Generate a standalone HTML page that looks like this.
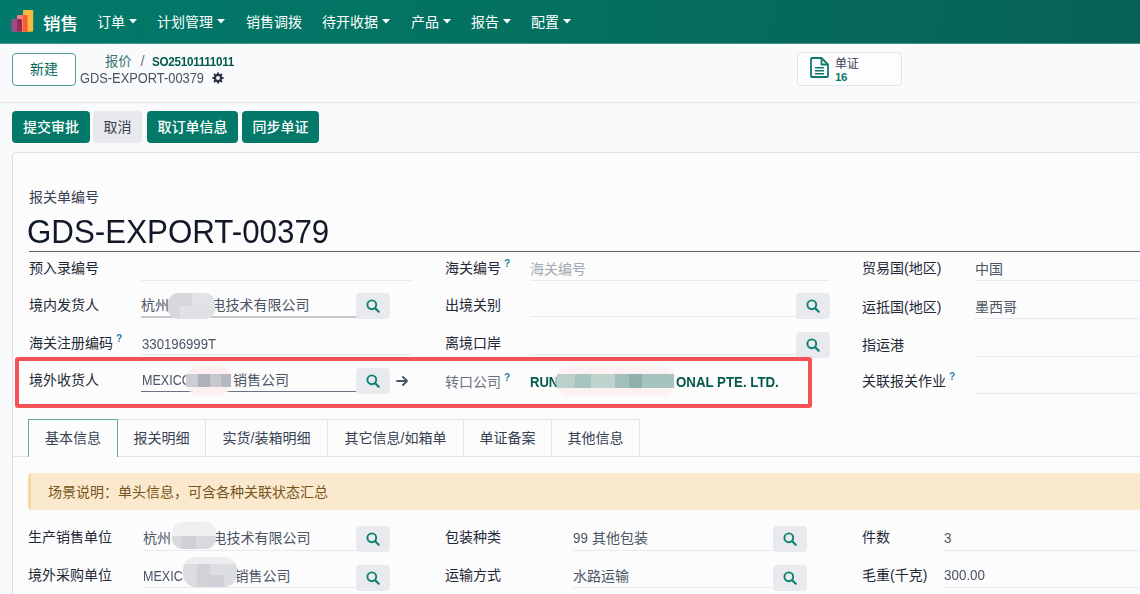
<!DOCTYPE html>
<html lang="zh-CN">
<head>
<meta charset="utf-8">
<title>销售</title>
<style>
*{box-sizing:border-box;margin:0;padding:0}
html,body{width:1140px;height:594px;overflow:hidden;background:#f9fafb}
body{font-family:"Liberation Sans","Noto Sans CJK SC",sans-serif;font-size:14px;color:#374151;position:relative}
.abs{position:absolute;white-space:nowrap;line-height:1}
/* navbar */
#nav{position:absolute;left:0;top:0;width:1140px;height:43px;background:linear-gradient(98deg,#01796b 0%,#04705f 50%,#076158 100%)}
#nav .brand{position:absolute;left:43px;top:13px;font-size:17.500px;font-weight:500;color:#fff;line-height:22px;white-space:nowrap}
#nav .mi{position:absolute;top:13px;font-size:14px;color:#fff;line-height:18px;white-space:nowrap}
#nav .caret{display:inline-block;margin-left:4px;vertical-align:3.500px}
#navb{position:absolute;left:0;top:43px;width:1140px;height:1px;background:linear-gradient(98deg,#3f9a8f 0%,#41948a 50%,#438b84 100%);z-index:2}
/* control panel */
#cp{position:absolute;left:0;top:43px;width:1140px;height:60px;background:#f9fafb;border-bottom:1px solid #e4e6ea}
.btn-new{position:absolute;left:12px;top:53px;width:64px;height:33px;border:1px solid #4fa195;border-radius:4px;background:#fff;color:#04695b;font-size:14px;text-align:center;line-height:31px}
.bc1{left:105px;top:53px;font-size:13.300px;line-height:16px;color:#37776e}
.bc1 b{color:#04594d;font-weight:700}
.bc1 .sl{color:#6b7280;margin:0 7px 0 9px;font-size:14.500px}
.bc2{left:80px;top:70px;font-size:14px;line-height:16px;color:#4b5563}
.statbtn{position:absolute;left:797px;top:52px;width:105px;height:34px;border:1px solid #e1e4e8;border-radius:4px;background:#fdfdfe}
.statbtn .t1{position:absolute;left:37px;top:5px;font-size:12px;line-height:13px;color:#374151}
.statbtn .t2{position:absolute;left:37px;top:18px;font-size:11.500px;line-height:13px;color:#0c7a6b;font-weight:700;letter-spacing:-0.300px}
/* status bar */
#sb{position:absolute;left:0;top:103px;width:1140px;height:51px;background:#f9fafb}
.b{position:absolute;top:111px;height:32px;border-radius:4px;font-size:14px;line-height:33.500px;text-align:center;white-space:nowrap}
.bp{background:#03796a;color:#fff;font-weight:500}
.bs{background:#e7e9ed;color:#374151}
/* sheet */
#sheet{position:absolute;left:12px;top:152px;width:1140px;height:460px;background:#fcfcfc;border:1px solid #dcdfe4;border-radius:4px 0 0 0}
.lbl{font-size:14px;color:#1f2937;font-weight:400}
.val{font-size:14px;color:#4b5563}
.ul{position:absolute;height:1px;background:#e8eaed}
.sbtn{position:absolute;width:34px;height:26px;background:#e9eaee;border-radius:4px}
.sbtn svg{position:absolute;left:10px;top:6px}
sup.q{font-size:10px;line-height:1;color:#1d86a3;font-weight:700;position:relative;top:-6px;margin-left:3px;vertical-align:baseline}

.t14{font-size:14px;line-height:20px}
.l{font-size:13px;letter-spacing:-0.150px}
.lb{display:inline-block;font-size:13px;letter-spacing:-0.300px;transform:scaleX(0.896);transform-origin:0 50%}
.ld{font-size:13px;letter-spacing:0.100px}
.w{display:inline-block;vertical-align:baseline;white-space:nowrap;line-height:1}
.s{display:inline-block;font-size:14.500px;transform-origin:0 50%}
.lbb{font-size:13.500px;letter-spacing:-0.100px}
.c-lbl2{color:#374151}
.title{font-size:34px;line-height:40px;color:#111827;transform-origin:0 50%;transform:scaleX(0.921)}
.ul.dk{background:#5b6270}
.ul.md{background:#8e94a0}
.gap{display:inline-block;height:1px}
.bl{position:absolute;overflow:hidden;filter:blur(0.700px)}
.bl i{position:absolute;display:block}
.b2 i{top:0;height:100%}
.tab{position:absolute;top:419px;height:37px;border:1px solid #e3e5e9;border-bottom:none;font-size:14px;line-height:37px;text-align:center;color:#374151;white-space:nowrap;background:#fcfcfc}
.tab.act{border-color:#62aaa0;background:#fcfcfc;height:38px;z-index:2}
</style>
</head>
<body>
<div id="nav">
  <svg style="position:absolute;left:11px;top:10px" width="23" height="22" viewBox="11 10 23 22">
    <rect x="11.400" y="19" width="10.600" height="12.800" rx="1.300" fill="#9b4d87"/>
    <rect x="17" y="15" width="10.600" height="16.800" rx="1.300" fill="#f87b7f"/>
    <path d="M17 19h3.700a1.300 1.300 0 0 1 1.300 1.300v10.200a1.300 1.300 0 0 1-1.300 1.300h-2.400a1.300 1.300 0 0 1-1.300-1.300z" fill="#962a55"/>
    <rect x="23" y="10" width="10.200" height="21.800" rx="1.300" fill="#fbb843"/>
    <path d="M23 15h3.300a1.300 1.300 0 0 1 1.300 1.300v14.200a1.300 1.300 0 0 1-1.300 1.300h-2a1.300 1.300 0 0 1-1.300-1.300z" fill="#f5602a"/>
  </svg>
  <div class="brand">销售</div>
  <div class="mi" style="left:97px">订单<svg class="caret" width="8" height="5" viewBox="0 0 8 5"><path d="M0 0h8L4 4.600z" fill="#fff"/></svg></div>
  <div class="mi" style="left:157px">计划管理<svg class="caret" width="8" height="5" viewBox="0 0 8 5"><path d="M0 0h8L4 4.600z" fill="#fff"/></svg></div>
  <div class="mi" style="left:246px">销售调拨</div>
  <div class="mi" style="left:322px">待开收据<svg class="caret" width="8" height="5" viewBox="0 0 8 5"><path d="M0 0h8L4 4.600z" fill="#fff"/></svg></div>
  <div class="mi" style="left:411px">产品<svg class="caret" width="8" height="5" viewBox="0 0 8 5"><path d="M0 0h8L4 4.600z" fill="#fff"/></svg></div>
  <div class="mi" style="left:471px">报告<svg class="caret" width="8" height="5" viewBox="0 0 8 5"><path d="M0 0h8L4 4.600z" fill="#fff"/></svg></div>
  <div class="mi" style="left:531px">配置<svg class="caret" width="8" height="5" viewBox="0 0 8 5"><path d="M0 0h8L4 4.600z" fill="#fff"/></svg></div>
</div>
<div id="navb"></div>
<div id="cp"></div>
<div class="btn-new">新建</div>
<div class="abs bc1">报价<span class="sl">/</span><b class="lb">SO25101111011</b></div>
<div class="abs bc2"><span class="s" style="transform:scaleX(0.886)">GDS-EXPORT-00379</span></div>
<svg style="position:absolute;left:212px;top:72px" width="12" height="12" viewBox="0 0 16 16"><path fill="#2b3443" fill-rule="evenodd" d="M6.56 2.59L6.71 0.51L9.29 0.51L9.44 2.59L10.81 3.16L12.39 1.79L14.21 3.61L12.84 5.19L13.41 6.56L15.49 6.71L15.49 9.29L13.41 9.44L12.84 10.81L14.21 12.39L12.39 14.21L10.81 12.84L9.44 13.41L9.29 15.49L6.71 15.49L6.56 13.41L5.19 12.84L3.61 14.21L1.79 12.39L3.16 10.81L2.59 9.44L0.51 9.29L0.51 6.71L2.59 6.56L3.16 5.19L1.79 3.61L3.61 1.79L5.19 3.16zM8 5.4a2.6 2.6 0 1 0 0 5.2a2.6 2.6 0 1 0 0 -5.2z"/></svg>
<div class="statbtn">
  <svg style="position:absolute;left:11.500px;top:4px" width="19" height="22" viewBox="0 0 19 22" fill="none" stroke="#0c7a6b" stroke-width="1.800" stroke-linejoin="round"><path d="M2.500 1h9l6.500 6.500v11.500a1 1 0 0 1-1 1h-15a1 1 0 0 1-1-1v-17a1 1 0 0 1 1-1z"/><path d="M11.500 1v6.500h6.500"/><path d="M5 10.800h9M5 13.800h9M5 16.800h9" stroke-width="1.500"/></svg>
  <div class="t1">单证</div><div class="t2">16</div>
</div>
<div id="sb"></div>
<div class="b bp" style="left:12px;width:78px">提交审批</div>
<div class="b bs" style="left:93px;width:49px">取消</div>
<div class="b bp" style="left:147px;width:91px">取订单信息</div>
<div class="b bp" style="left:242px;width:77px">同步单证</div>
<div id="sheet"></div>

<!-- form sheet content -->
<div class="abs t14 c-lbl2" style="left:29px;top:187px">报关单编号</div>
<div class="abs title" style="left:27px;top:211px">GDS-EXPORT-00379</div>
<div class="ul dk" style="left:29px;top:251px;width:1111px"></div>

<!-- left column -->
<div class="abs t14 lbl" style="left:29px;top:258px">预入录编号</div>
<div class="ul" style="left:141px;top:280px;width:271px"></div>
<div class="abs t14 lbl" style="left:29px;top:295px">境内发货人</div>
<div class="abs t14 val" style="left:141px;top:295px">杭州<span class="gap" style="width:42.500px"></span>电技术有限公司</div>
<div class="ul" style="left:141px;top:316px;width:216px;height:2px;background:#c4c6cc"></div>
<div class="sbtn" style="left:356px;top:293px"><svg width="14" height="14" viewBox="0 0 14 14"><circle cx="5.800" cy="5.800" r="4.400" fill="none" stroke="#0a8070" stroke-width="1.900"/><path d="M9.200 9.200l3.500 3.500" stroke="#0a8070" stroke-width="2.100" stroke-linecap="round"/></svg></div>
<div class="abs t14 lbl" style="left:29px;top:333px">海关注册编码<sup class="q">?</sup></div>
<div class="abs t14 val" style="left:142px;top:334px"><span class="w" style="width:74px"><span class="s" style="transform:scaleX(0.909)">330196999T</span></span></div>
<div class="ul" style="left:141px;top:354px;width:271px"></div>
<div class="abs t14 lbl" style="left:29px;top:370px">境外收货人</div>
<div class="abs t14 val" style="left:141.500px;top:370px"><span class="w" style="width:49.5px"><span class="s" style="transform:scaleX(0.865)">MEXICO</span></span><span class="gap" style="width:42px"></span>销售公司</div>
<div class="ul" style="left:141px;top:391px;width:216px;background:#6b7280"></div>
<div class="sbtn" style="left:356px;top:368px"><svg width="14" height="14" viewBox="0 0 14 14"><circle cx="5.800" cy="5.800" r="4.400" fill="none" stroke="#0a8070" stroke-width="1.900"/><path d="M9.200 9.200l3.500 3.500" stroke="#0a8070" stroke-width="2.100" stroke-linecap="round"/></svg></div>
<svg style="position:absolute;left:395.500px;top:376px" width="12" height="10" viewBox="0 0 12 10" fill="none" stroke="#4b5563" stroke-width="1.900" stroke-linecap="round" stroke-linejoin="round"><path d="M1 5h10M7 1l4 4-4 4"/></svg>

<!-- middle column -->
<div class="abs t14 lbl" style="left:445px;top:258px">海关编号<sup class="q">?</sup></div>
<div class="abs t14" style="left:530px;top:259px;color:#a3a9b3">海关编号</div>
<div class="ul" style="left:530px;top:280px;width:299px"></div>
<div class="abs t14 lbl" style="left:445px;top:294.500px">出境关别</div>
<div class="ul" style="left:530px;top:316px;width:267px"></div>
<div class="sbtn" style="left:796px;top:293px"><svg width="14" height="14" viewBox="0 0 14 14"><circle cx="5.800" cy="5.800" r="4.400" fill="none" stroke="#0a8070" stroke-width="1.900"/><path d="M9.200 9.200l3.500 3.500" stroke="#0a8070" stroke-width="2.100" stroke-linecap="round"/></svg></div>
<div class="abs t14 lbl" style="left:445px;top:333px">离境口岸</div>
<div class="ul" style="left:530px;top:354px;width:267px"></div>
<div class="sbtn" style="left:796px;top:332px"><svg width="14" height="14" viewBox="0 0 14 14"><circle cx="5.800" cy="5.800" r="4.400" fill="none" stroke="#0a8070" stroke-width="1.900"/><path d="M9.200 9.200l3.500 3.500" stroke="#0a8070" stroke-width="2.100" stroke-linecap="round"/></svg></div>
<div class="abs t14" style="left:445px;top:372px;color:#6b7280">转口公司<sup class="q">?</sup></div>
<div class="abs t14" style="left:530px;top:372px;color:#04594d;font-weight:700"><span class="w" style="width:28px"><span class="s" style="transform:scaleX(0.9)">RUN</span></span><span class="gap" style="width:117.500px"></span><span class="w" style="width:103px"><span class="s" style="transform:scaleX(0.916)">ONAL PTE. LTD.</span></span></div>

<!-- right column -->
<div class="abs t14 lbl" style="left:862px;top:258px">贸易国(地区)</div>
<div class="abs t14 val" style="left:975px;top:259px">中国</div>
<div class="ul" style="left:975px;top:280px;width:165px"></div>
<div class="abs t14 lbl" style="left:862px;top:297px">运抵国(地区)</div>
<div class="abs t14 val" style="left:975px;top:297px">墨西哥</div>
<div class="ul" style="left:975px;top:318px;width:165px"></div>
<div class="abs t14 lbl" style="left:862px;top:335px">指运港</div>
<div class="ul" style="left:975px;top:356px;width:165px"></div>
<div class="abs t14 lbl" style="left:862px;top:371px">关联报关作业<sup class="q">?</sup></div>
<div class="ul" style="left:975px;top:393px;width:165px"></div>

<!-- red highlight -->
<div style="position:absolute;left:15px;top:357px;width:797px;height:51px;border:4px solid #f65256;border-radius:3px"></div>

<!-- tabs -->
<div class="ul" style="left:13px;top:456px;width:1127px;background:#e3e5e9"></div>
<div class="tab act" style="left:28px;width:90px">基本信息</div>
<div class="tab" style="left:117px;width:89px">报关明细</div>
<div class="tab" style="left:205px;width:123px">实货/装箱明细</div>
<div class="tab" style="left:327px;width:137px">其它信息/如箱单</div>
<div class="tab" style="left:463px;width:89px">单证备案</div>
<div class="tab" style="left:551px;width:89px">其他信息</div>

<!-- alert -->
<div style="position:absolute;left:28px;top:473px;width:1120px;height:37px;background:#fbe9cd;border-left:3px solid #f6d8a6;border-radius:4px 0 0 4px"></div>
<div class="abs t14" style="left:48px;top:482px;color:#76551c">场景说明：单头信息，可含各种关联状态汇总</div>

<!-- bottom rows -->
<div class="abs t14 lbl" style="left:28px;top:527px">生产销售单位</div>
<div class="abs t14 val" style="left:143px;top:528px">杭州<span class="gap" style="width:41.500px"></span>电技术有限公司</div>
<div class="ul" style="left:143px;top:550px;width:213px"></div>
<div class="sbtn" style="left:356px;top:526px"><svg width="14" height="14" viewBox="0 0 14 14"><circle cx="5.800" cy="5.800" r="4.400" fill="none" stroke="#0a8070" stroke-width="1.900"/><path d="M9.200 9.200l3.500 3.500" stroke="#0a8070" stroke-width="2.100" stroke-linecap="round"/></svg></div>
<div class="abs t14 lbl" style="left:28px;top:565px">境外采购单位</div>
<div class="abs t14 val" style="left:143px;top:566px"><span class="w" style="width:39.6px"><span class="s" style="transform:scaleX(0.865)">MEXIC</span></span><span class="gap" style="width:51.800px"></span>销售公司</div>
<div class="ul" style="left:143px;top:587px;width:213px"></div>
<div class="sbtn" style="left:356px;top:565px"><svg width="14" height="14" viewBox="0 0 14 14"><circle cx="5.800" cy="5.800" r="4.400" fill="none" stroke="#0a8070" stroke-width="1.900"/><path d="M9.200 9.200l3.500 3.500" stroke="#0a8070" stroke-width="2.100" stroke-linecap="round"/></svg></div>

<div class="abs t14 lbl" style="left:445px;top:527px">包装种类</div>
<div class="abs t14 val" style="left:573px;top:528px"><span class="w" style="width:15px"><span class="s" style="transform:scaleX(0.93)">99</span></span> 其他包装</div>
<div class="ul" style="left:573px;top:550px;width:200px"></div>
<div class="sbtn" style="left:773px;top:526px"><svg width="14" height="14" viewBox="0 0 14 14"><circle cx="5.800" cy="5.800" r="4.400" fill="none" stroke="#0a8070" stroke-width="1.900"/><path d="M9.200 9.200l3.500 3.500" stroke="#0a8070" stroke-width="2.100" stroke-linecap="round"/></svg></div>
<div class="abs t14 lbl" style="left:445px;top:565px">运输方式</div>
<div class="abs t14 val" style="left:573px;top:566px">水路运输</div>
<div class="ul" style="left:573px;top:587px;width:200px"></div>
<div class="sbtn" style="left:773px;top:565px"><svg width="14" height="14" viewBox="0 0 14 14"><circle cx="5.800" cy="5.800" r="4.400" fill="none" stroke="#0a8070" stroke-width="1.900"/><path d="M9.200 9.200l3.500 3.500" stroke="#0a8070" stroke-width="2.100" stroke-linecap="round"/></svg></div>

<div class="abs t14 lbl" style="left:862px;top:527px">件数</div>
<div class="abs t14 val" style="left:944px;top:528px"><span class="w" style="width:7.5px"><span class="s" style="transform:scaleX(0.93)">3</span></span></div>
<div class="ul" style="left:944px;top:550px;width:196px"></div>
<div class="abs t14 lbl" style="left:862px;top:565px">毛重(千克)</div>
<div class="abs t14 val" style="left:944px;top:565px"><span class="w" style="width:41px"><span class="s" style="transform:scaleX(0.925)">300.00</span></span></div>
<div class="ul" style="left:944px;top:587px;width:196px"></div>

<!-- redaction blur patches -->
<div class="bl" style="left:168px;top:293px;width:47px;height:26px;border-radius:10px;background:#e2e3e7"><i style="left:0;top:0;width:24px;height:26px;background:#d6d8dd"></i><i style="left:12px;top:13px;width:35px;height:13px;background:#dfe1e5"></i></div>
<div class="bl" style="left:186px;top:366px;width:46px;height:29px;border-radius:13px;background:#fdefef;filter:blur(0.800px)"></div>
<div class="bl b2" style="left:186px;top:374px;width:45px;height:13px"><i style="left:0;width:12px;background:#cbcdd3"></i><i style="left:12px;width:12px;background:#adb1b9"></i><i style="left:24px;width:11px;background:#c6c8ce"></i><i style="left:35px;width:10px;background:#b6b9c1"></i></div>
<div class="bl" style="left:556px;top:366px;width:119px;height:30px;border-radius:14px;background:#fdf0f0;filter:blur(0.800px)"></div>
<div class="bl b2" style="left:557px;top:374px;width:117px;height:14px"><i style="left:0;width:18px;background:#b9d0cb"></i><i style="left:18px;width:16px;background:#a8c4bf"></i><i style="left:34px;width:24px;background:#bed4cf"></i><i style="left:58px;width:14px;background:#a2bfba"></i><i style="left:72px;width:13px;background:#8db1aa"></i><i style="left:85px;width:32px;background:#a6c3bd"></i></div>
<div class="bl" style="left:172px;top:522px;width:44px;height:27px;border-radius:11px;background:#eeeff1"><i style="left:0;top:14px;width:44px;height:13px;background:#d7d9dd"></i><i style="left:10px;top:14px;width:14px;height:13px;background:#ced0d5"></i></div>
<div class="bl" style="left:183px;top:557px;width:54px;height:30px;border-radius:13px;background:#ededf0"><i style="left:0;top:7px;width:54px;height:23px;background:#dcdde1"></i><i style="left:14px;top:7px;width:13px;height:23px;background:#d0d2d7"></i><i style="left:27px;top:18px;width:14px;height:12px;background:#cfd1d6"></i></div>
</body>
</html>
